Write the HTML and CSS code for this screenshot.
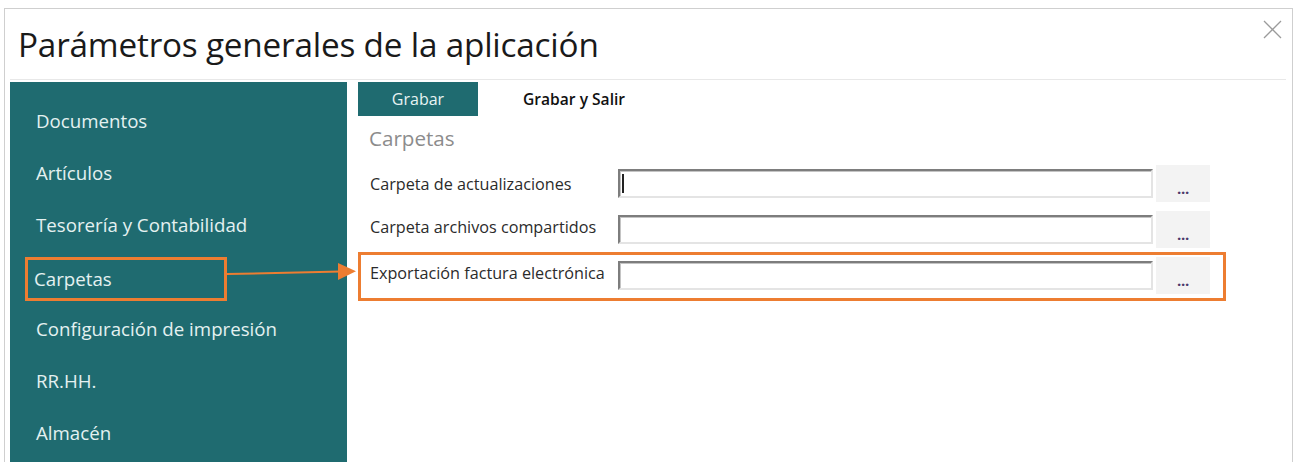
FILE: index.html
```html
<!DOCTYPE html>
<html lang="es">
<head>
<meta charset="utf-8">
<title>Parámetros generales de la aplicación</title>
<link rel="stylesheet" href="styles.css">
</head>
<body>
<div class="dialog">
  <header class="head">
    <h1 class="title">Parámetros generales de la aplicación</h1>
    <button class="close" aria-label="Cerrar">
      <svg viewBox="0 0 19 19" width="19" height="19"><path d="M1 1 L18 18 M18 1 L1 18" stroke="#9b9b9b" stroke-width="1.3" fill="none"/></svg>
    </button>
  </header>
  <div class="sep"></div>
  <div class="body">
    <nav class="side">
      <div class="item">Documentos</div>
      <div class="item">Artículos</div>
      <div class="item">Tesorería y Contabilidad</div>
      <div class="item item-hl"><span class="hl-box">Carpetas</span></div>
      <div class="item">Configuración de impresión</div>
      <div class="item">RR.HH.</div>
      <div class="item">Almacén</div>
    </nav>
    <main class="main">
      <div class="toolbar">
        <button class="btn-primary">Grabar</button>
        <button class="btn-plain">Grabar y Salir</button>
      </div>
      <h2 class="section">Carpetas</h2>
      <div class="form">
        <div class="row">
          <label class="label">Carpeta de actualizaciones</label>
          <div class="field"><span class="caret"></span></div>
          <button class="browse">...</button>
        </div>
        <div class="row row-up">
          <label class="label">Carpeta archivos compartidos</label>
          <div class="field"></div>
          <button class="browse">...</button>
        </div>
        <div class="row-hl">
          <div class="row row-up">
            <label class="label">Exportación factura electrónica</label>
            <div class="field"></div>
            <button class="browse">...</button>
          </div>
        </div>
      </div>
    </main>
  </div>
  <svg class="arrow" viewBox="0 0 135 20" width="135" height="20">
    <line x1="2" y1="12" x2="116" y2="9.6" stroke="#ed7d31" stroke-width="2"/>
    <polygon points="131,9.3 113,1 113,18" fill="#ed7d31"/>
  </svg>
</div>
</body>
</html>
```

FILE: styles.css
```css
* { box-sizing: border-box; }
html, body { margin: 0; padding: 0; background: #fff; }
body {
  font-family: "Open Sans", "Noto Sans", sans-serif;
  overflow: hidden;
  width: 1295px;
  height: 462px;
}
.dialog {
  position: relative;
  margin: 8px 0 0 4px;
  width: 1289px;
  height: 454px;
  border: 1px solid #cfcfcf;
  border-bottom: none;
  background: #fff;
}
.head {
  display: flex;
  justify-content: space-between;
  align-items: flex-start;
  height: 70px;
}
.title {
  margin: 0;
  padding-left: 13px;
  font-weight: 400;
  font-size: 33.3px;
  line-height: 70px;
  color: #1a1a1a;
  letter-spacing: -0.2px;
}
.close {
  margin: 11px 10px 0 0;
  width: 19px;
  height: 19px;
  padding: 0;
  border: none;
  background: none;
  display: block;
}
.close svg { display: block; }
.sep {
  height: 1px;
  margin: 0 6px 0 5px;
  background: #e8e8e8;
}
.body {
  display: flex;
  margin-top: 2px;
  padding-left: 5px;
  height: 380px;
}
.side {
  width: 337px;
  flex: none;
  background: #1f6b70;
  padding-top: 13px;
}
.item {
  height: 52px;
  line-height: 52px;
  padding-left: 26px;
  font-size: 18.7px;
  color: #e4f1f1;
  white-space: nowrap;
}
.item-hl {
  padding-left: 15px;
  padding-top: 6px;
}
.hl-box {
  display: block;
  width: 202px;
  height: 44px;
  line-height: 37px;
  border: 3px solid #ed7d31;
  padding-left: 6px;
}
.main {
  flex: 1;
  margin-left: 11px;
}
.toolbar {
  display: flex;
  height: 34px;
}
.btn-primary {
  width: 120px;
  height: 34px;
  border: none;
  background: #1f6b70;
  color: #e8f3f3;
  font-family: inherit;
  font-size: 16px;
  padding: 0;
}
.btn-plain {
  height: 34px;
  border: none;
  background: none;
  color: #111;
  font-family: inherit;
  font-size: 15.6px;
  font-weight: 600;
  padding: 0 0 0 45px;
}
.section {
  margin: 8px 0 0 0;
  padding-left: 11px;
  height: 28px;
  line-height: 28px;
  font-size: 20.6px;
  font-weight: 400;
  color: #8c8c8c;
}
.form {
  margin-top: 13px;
  display: flex;
  flex-direction: column;
  gap: 9px;
}
.row {
  display: flex;
  align-items: center;
  height: 37px;
  padding-left: 12px;
}
.row-hl {
  margin-top: -5px;
  width: fit-content;
  border: 3px solid #ed7d31;
  padding: 2px 13px 4px 9px;
}
.row-hl .row { padding-left: 0; }
.label {
  width: 248px;
  flex: none;
  font-size: 16.2px;
  color: #2b2b2b;
  white-space: nowrap;
}
.row-up .label { padding-bottom: 5px; }
.field {
  width: 535px;
  height: 29px;
  flex: none;
  background: #fff;
  border-top: 2px solid #7d7d7d;
  border-left: 2px solid #7d7d7d;
  border-right: 2px solid #e4e4e4;
  border-bottom: 2px solid #e4e4e4;
  box-shadow: inset 1px 1px 0 #c4c4c4;
  padding: 3px 0 0 2px;
}
.caret {
  display: block;
  width: 2px;
  height: 19px;
  background: #222;
}
.browse {
  margin-left: 3px;
  width: 54px;
  height: 37px;
  flex: none;
  border: none;
  background: #f3f3f3;
  color: #4a3a6a;
  font-family: inherit;
  font-size: 15px;
  font-weight: 700;
  padding: 8px 0 0 0;
  letter-spacing: -0.3px;
}
.arrow {
  position: absolute;
  left: 220px;
  top: 253px;
}
```
